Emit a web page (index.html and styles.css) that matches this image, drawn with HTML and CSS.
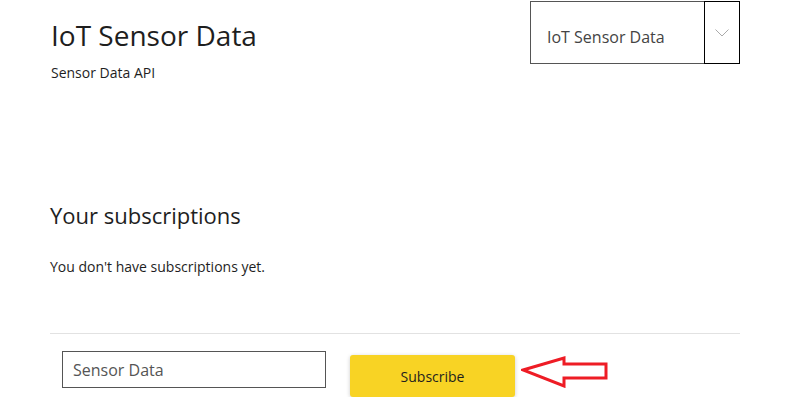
FILE: index.html
```html
<!DOCTYPE html>
<html>
<head>
<title>IoT Sensor Data</title>
<link rel="stylesheet" href="styles.css">
</head>
<body>
  <div id="page">
    <div id="header">
      <div id="titles">
        <h1>IoT Sensor Data</h1>
        <p class="sub">Sensor Data API</p>
      </div>
      <div class="select">
        <span class="select-text">IoT Sensor Data</span>
        <span class="select-btn">
          <svg width="14" height="8" viewBox="0 0 14 8"><path d="M0.5 0.5 L7 7 L13.5 0.5" fill="none" stroke="#aaa" stroke-width="1"/></svg>
        </span>
      </div>
    </div>
    <div id="subs">
      <h2>Your subscriptions</h2>
      <p>You don't have subscriptions yet.</p>
    </div>
    <div id="form">
      <input type="text" class="name" value="Sensor Data">
      <button class="subscribe">Subscribe</button>
      <svg class="arrow" width="90" height="32" viewBox="0 0 90 32">
        <polygon points="2,14 43,2 43,8 85,8 85,22 43,22 43,30" fill="none" stroke="#ee1c25" stroke-width="3" stroke-linejoin="miter"/>
      </svg>
    </div>
  </div>
</body>
</html>
```

FILE: styles.css
```css
body {
margin: 0;
background-color: #ffffff;
font-family: "Open Sans", "Noto Sans", sans-serif;
color: #1e1e1e;
}

#page {
width: 690px;
margin-left: 50px;
}

#header {
display: flex;
justify-content: space-between;
align-items: flex-start;
height: 150px;
}

#titles {
padding-top: 15px;
padding-left: 1px;
}

h1 {
margin: 0;
font-size: 28px;
font-weight: 400;
line-height: 40px;
}

.sub {
margin: 8px 0 0 0;
font-size: 14px;
}

.select {
display: flex;
margin-top: 1px;
height: 63px;
width: 210px;
box-sizing: border-box;
}

.select-text {
width: 174px;
box-sizing: border-box;
border: 1px solid #555;
border-right: none;
padding: 10px 0 0 16px;
line-height: 51px;
font-size: 16px;
color: #444;
white-space: nowrap;
}

.select-btn {
width: 36px;
box-sizing: border-box;
border: 1px solid #000;
display: flex;
align-items: center;
justify-content: center;
}

#subs {
height: 133px;
padding-top: 50px;
border-bottom: 1px solid #e2e2e2;
}

h2 {
margin: 0;
font-size: 22px;
font-weight: 400;
line-height: 30px;
}

#subs p {
margin: 27px 0 0 0;
font-size: 14px;
}

#form {
display: flex;
align-items: flex-start;
padding-top: 17px;
padding-left: 12px;
}

.name {
width: 264px;
height: 37px;
box-sizing: border-box;
border: 1px solid #555;
padding: 0 10px;
font-family: "Open Sans", "Noto Sans", sans-serif;
font-size: 16px;
color: #555;
margin: 0;
}

.subscribe {
margin: 4px 0 0 24px;
width: 165px;
height: 42px;
background-color: #f8d324;
border: none;
border-radius: 3px;
box-shadow: 0 1px 4px rgba(0, 0, 0, 0.2);
font-family: "Open Sans", "Noto Sans", sans-serif;
font-size: 14px;
color: #1e1e1e;
}

.arrow {
margin: 5px 0 0 6px;
}
```
